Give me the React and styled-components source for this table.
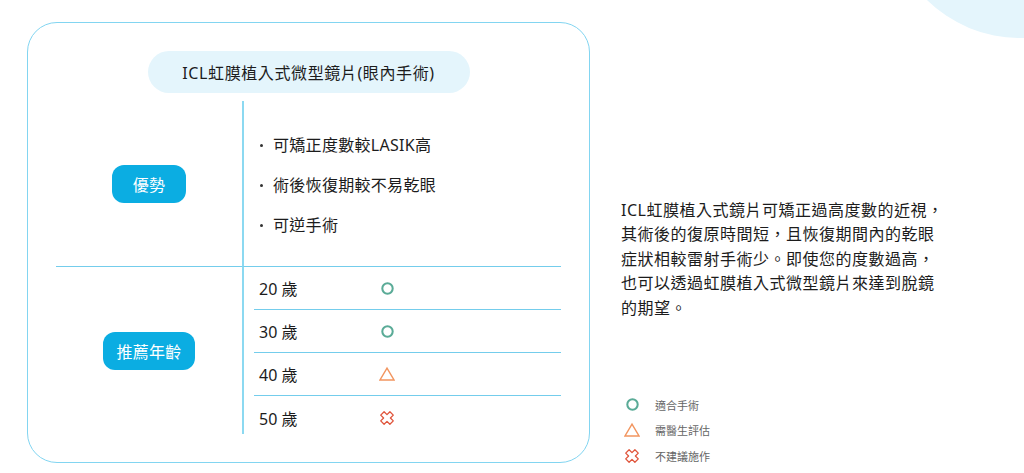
import React from 'react'
import styled, { createGlobalStyle } from 'styled-components'

const Global = createGlobalStyle`
  html, body { margin: 0; padding: 0; background: #fff; }
  body {
    font-family: "Noto Sans", "Noto Sans CJK TC", sans-serif;
    color: #1c1c1c;
    overflow: hidden;
  }
`

const LINE = '#74cdec'

const Page = styled.div`
  position: relative;
  width: 1024px;
  height: 473px;
  display: flex;
  align-items: flex-start;
  gap: 31px;
  padding: 22px 0 0 27px;
  box-sizing: border-box;
  overflow: hidden;
`

const Blob = styled.div`
  position: absolute;
  left: 887px;
  top: -228px;
  width: 266px;
  height: 266px;
  border-radius: 50%;
  background: #e4f5fc;
`

const Card = styled.section`
  width: 563px;
  height: 441px;
  box-sizing: border-box;
  border: 1.5px solid #82d5f1;
  border-radius: 30px;
  padding: 28px 27px 0 27px;
  display: flex;
  flex-direction: column;
  align-items: center;
`

const TitlePill = styled.div`
  width: 322px;
  height: 42px;
  border-radius: 21px;
  background: #e4f5fc;
  display: flex;
  align-items: center;
  justify-content: center;
  font-size: 16px;
  letter-spacing: 0.6px;
  color: #1c1c1c;
`

const Table = styled.div`
  margin-top: 8px;
  width: 505px;
  display: grid;
  grid-template-columns: 186px 319px;
  grid-template-rows: 166px 167px;
`

const Cell = styled.div`
  display: flex;
  box-sizing: border-box;
  border-left: ${p => (p.$right ? '2px solid #8cd9f1' : 'none')};
  border-bottom: ${p => (p.$top ? `1.5px solid ${LINE}` : 'none')};
  align-items: ${p => (p.$right ? 'stretch' : 'center')};
  justify-content: ${p => (p.$right ? 'flex-start' : 'center')};
  flex-direction: ${p => (p.$right ? 'column' : 'row')};
`

const Badge = styled.div`
  width: ${p => p.$w}px;
  height: 38px;
  border-radius: 12px;
  background: #0badE2;
  color: #fff;
  font-size: 16px;
  font-weight: 400;
  letter-spacing: 0.3px;
  display: flex;
  align-items: center;
  justify-content: center;
`

const BulletList = styled.ul`
  list-style: none;
  margin: 0;
  padding: 0 0 0 16px;
  height: 100%;
  display: flex;
  flex-direction: column;
  justify-content: center;
`

const Bullet = styled.li`
  height: 40px;
  display: flex;
  align-items: center;
  gap: 10px;
  font-size: 16px;
  letter-spacing: 0.3px;
  color: #1c1c1c;

  &::before {
    content: '';
    width: 3px;
    height: 3px;
    margin-top: 3px;
    border-radius: 50%;
    background: #333;
  }
`

const AgeList = styled.div`
  padding-left: 10px;
`

const AgeRow = styled.div`
  height: 43px;
  box-sizing: border-box;
  display: grid;
  grid-template-columns: 120px 16px;
  align-items: center;
  padding-left: 5px;
  border-bottom: ${p => (p.$last ? 'none' : `1.5px solid ${LINE}`)};
  font-size: 16px;
  color: #1c1c1c;
`

const Side = styled.aside`
  padding-top: 176px;
  display: flex;
  flex-direction: column;
`

const Para = styled.p`
  margin: 0;
  font-size: 16px;
  line-height: 24.4px;
  letter-spacing: 0.5px;
  color: #1c1c1c;
`

const Legend = styled.ul`
  list-style: none;
  margin: 72px 0 0;
  padding: 0 0 0 3px;
`

const LegendItem = styled.li`
  height: 25.5px;
  display: flex;
  align-items: center;
  gap: 15px;
  font-size: 11px;
  color: #666;
`

const IconBox = styled.span`
  width: 16px;
  height: 16px;
  display: flex;
  align-items: center;
  justify-content: center;
`

const Circle = ({ size = 12 }) => (
  <svg width={size} height={size} viewBox="0 0 14 14">
    <circle cx="7" cy="7" r="5.6" fill="none" stroke="#5aab97" strokeWidth="2.2" />
  </svg>
)

const Triangle = ({ size = 16 }) => (
  <svg width={size} height={size} viewBox="0 0 16 16">
    <polygon points="8,2.2 15,14 1,14" fill="none" stroke="#f2955f" strokeWidth="1.4" />
  </svg>
)

const Cross = ({ size = 16 }) => (
  <svg width={size} height={size} viewBox="0 0 16 16">
    <polygon
      points="5.6,1.5 10.4,1.5 10.4,5.6 14.5,5.6 14.5,10.4 10.4,10.4 10.4,14.5 5.6,14.5 5.6,10.4 1.5,10.4 1.5,5.6 5.6,5.6"
      transform="rotate(45 8 8)"
      fill="none"
      stroke="#e0553c"
      strokeWidth="1.3"
      strokeLinejoin="round"
    />
  </svg>
)

const marks = {
  ok: Circle,
  ask: Triangle,
  no: Cross,
}

const ages = [
  { age: '20 歲', mark: 'ok' },
  { age: '30 歲', mark: 'ok' },
  { age: '40 歲', mark: 'ask' },
  { age: '50 歲', mark: 'no' },
]

const pros = ['可矯正度數較LASIK高', '術後恢復期較不易乾眼', '可逆手術']

export default function App() {
  return (
    <>
      <Global />
      <Page>
        <Blob />
        <Card>
          <TitlePill>ICL虹膜植入式微型鏡片(眼內手術)</TitlePill>
          <Table>
            <Cell $top>
              <Badge $w={74}>優勢</Badge>
            </Cell>
            <Cell $top $right>
              <BulletList>
                {pros.map(p => (
                  <Bullet key={p}>{p}</Bullet>
                ))}
              </BulletList>
            </Cell>
            <Cell>
              <Badge $w={92}>推薦年齡</Badge>
            </Cell>
            <Cell $right>
              <AgeList>
                {ages.map((a, i) => {
                  const Mark = marks[a.mark]
                  return (
                    <AgeRow key={a.age} $last={i === ages.length - 1}>
                      <span>{a.age}</span>
                      <IconBox>
                        <Mark size={a.mark === 'ok' ? 13 : 16} />
                      </IconBox>
                    </AgeRow>
                  )
                })}
              </AgeList>
            </Cell>
          </Table>
        </Card>
        <Side>
          <Para>
            ICL虹膜植入式鏡片可矯正過高度數的近視，<br />
            其術後的復原時間短，且恢復期間內的乾眼<br />
            症狀相較雷射手術少。即使您的度數過高，<br />
            也可以透過虹膜植入式微型鏡片來達到脫鏡<br />
            的期望。
          </Para>
          <Legend>
            <LegendItem>
              <IconBox><Circle size={13} /></IconBox>
              適合手術
            </LegendItem>
            <LegendItem>
              <IconBox><Triangle /></IconBox>
              需醫生評估
            </LegendItem>
            <LegendItem>
              <IconBox><Cross /></IconBox>
              不建議施作
            </LegendItem>
          </Legend>
        </Side>
      </Page>
    </>
  )
}
